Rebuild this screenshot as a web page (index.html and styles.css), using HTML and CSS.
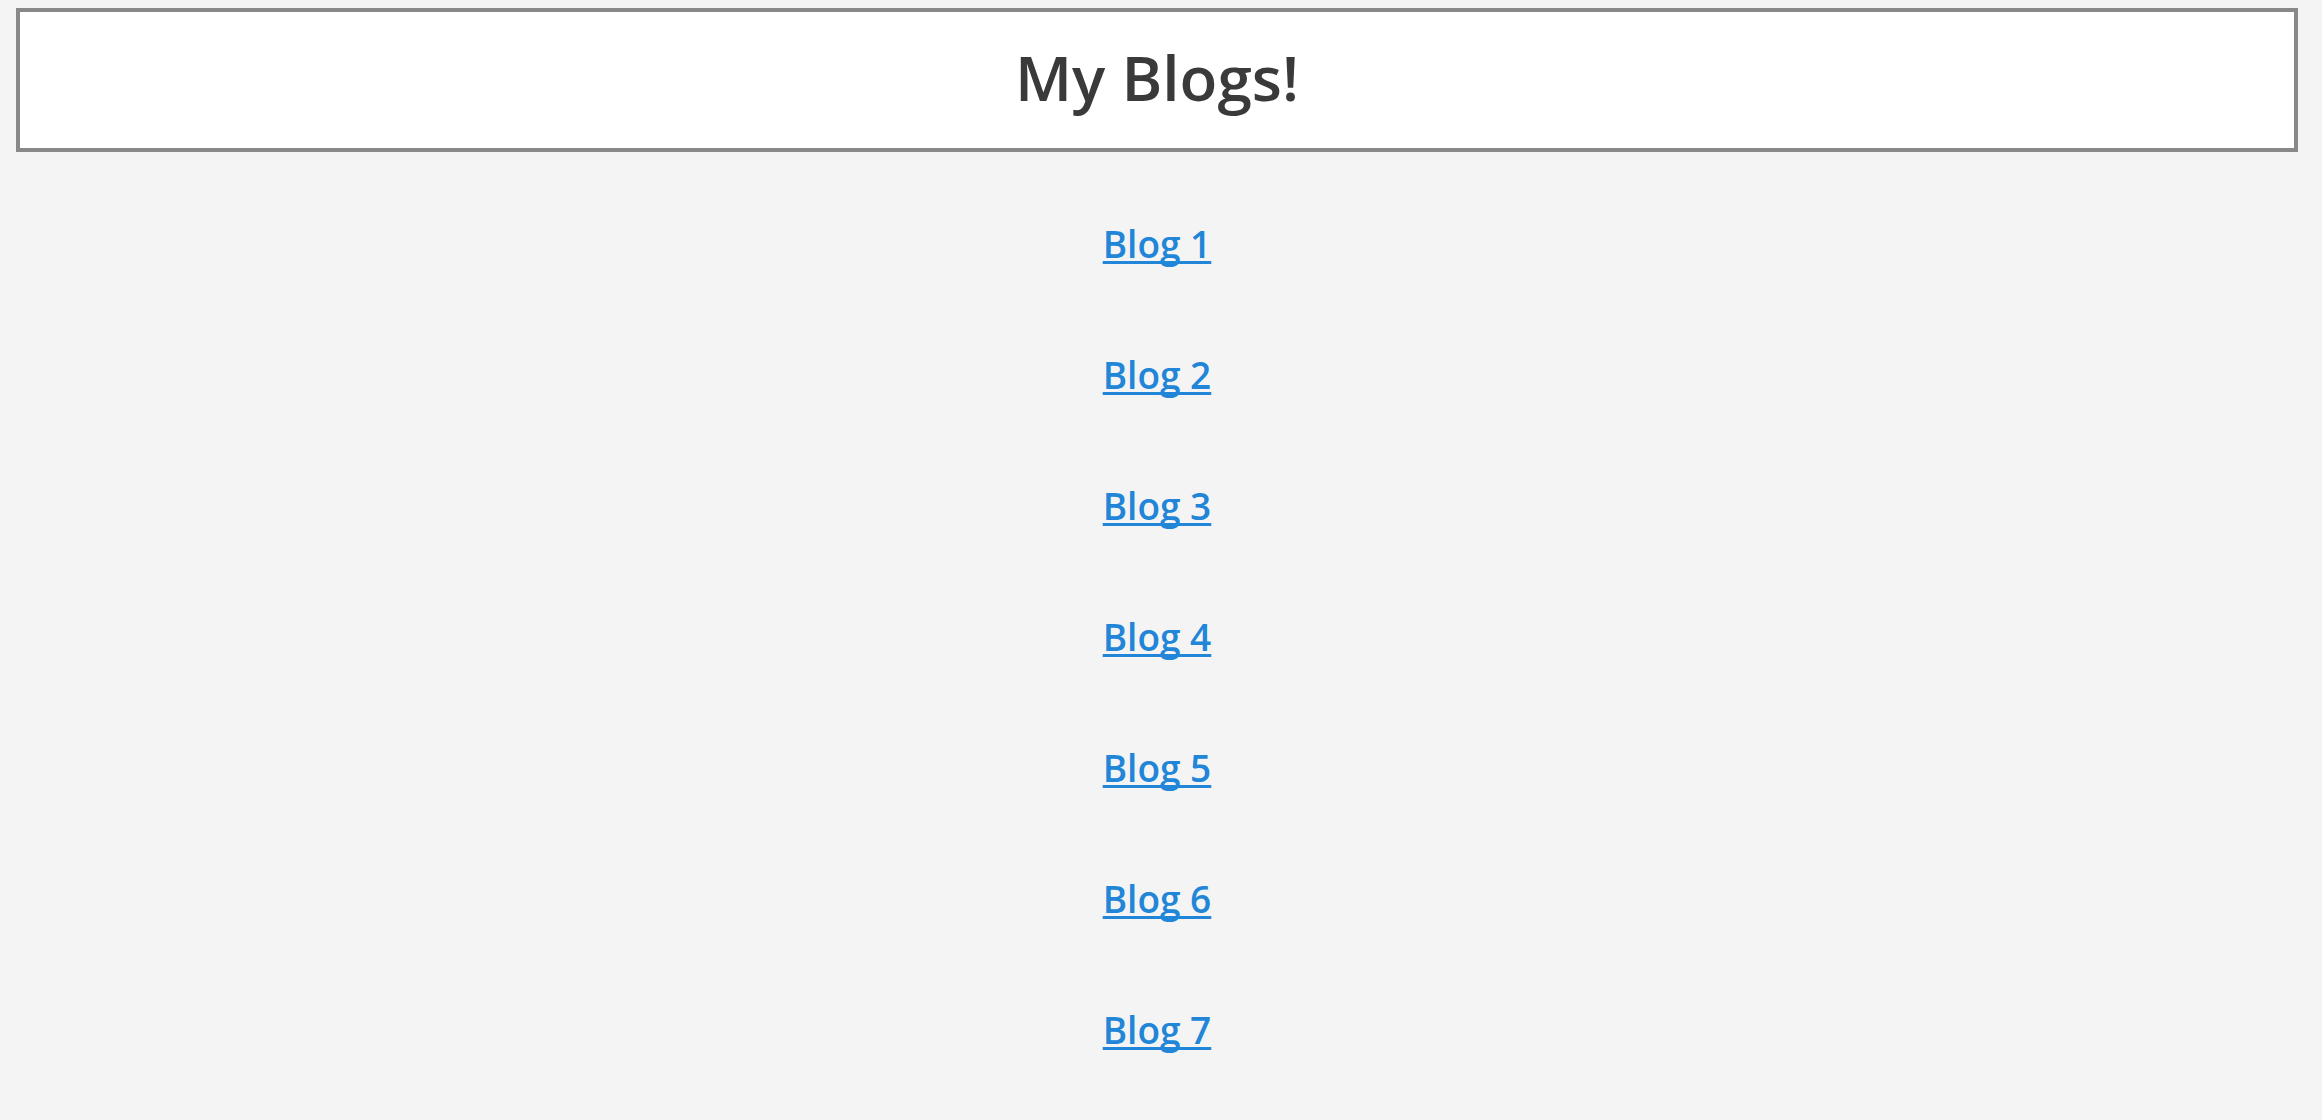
FILE: index.html
```html
<!DOCTYPE html>
<html lang="en">
<head>
<meta charset="utf-8">
<title>My Blogs!</title>
<link rel="stylesheet" href="styles.css">
</head>
<body>
<div class="page">
  <header class="site-header">
    <h1 class="site-title">My Blogs!</h1>
  </header>
  <nav class="blog-list">
    <a class="blog-link" href="#">Blog 1</a>
    <a class="blog-link" href="#">Blog 2</a>
    <a class="blog-link" href="#">Blog 3</a>
    <a class="blog-link" href="#">Blog 4</a>
    <a class="blog-link" href="#">Blog 5</a>
    <a class="blog-link" href="#">Blog 6</a>
    <a class="blog-link" href="#">Blog 7</a>
  </nav>
</div>
</body>
</html>
```
FILE: styles.css
```css
html, body {
  margin: 0;
  padding: 0;
  background: #f4f4f4;
}
body {
  padding: 8px 0 0 0;
  font-family: "Open Sans", "Noto Sans", sans-serif;
}
.page {
  margin: 0 24px 0 16px;
}
.site-header {
  background: #ffffff;
  border: 4px solid #888888;
  padding: 21px 0 27px;
}
.site-title {
  margin: 0;
  text-align: center;
  font-size: 62px;
  line-height: 88px;
  font-weight: 600;
  color: #3a3a3a;
}
.blog-list {
  display: flex;
  flex-direction: column;
  align-items: center;
  gap: 81px;
  padding-top: 67px;
}
.blog-link {
  font-size: 37px;
  line-height: 50px;
  font-weight: 600;
  color: #2185d8;
  text-decoration: underline;
  text-decoration-thickness: 3px;
  text-decoration-skip-ink: none;
  text-underline-offset: 3px;
}
```
